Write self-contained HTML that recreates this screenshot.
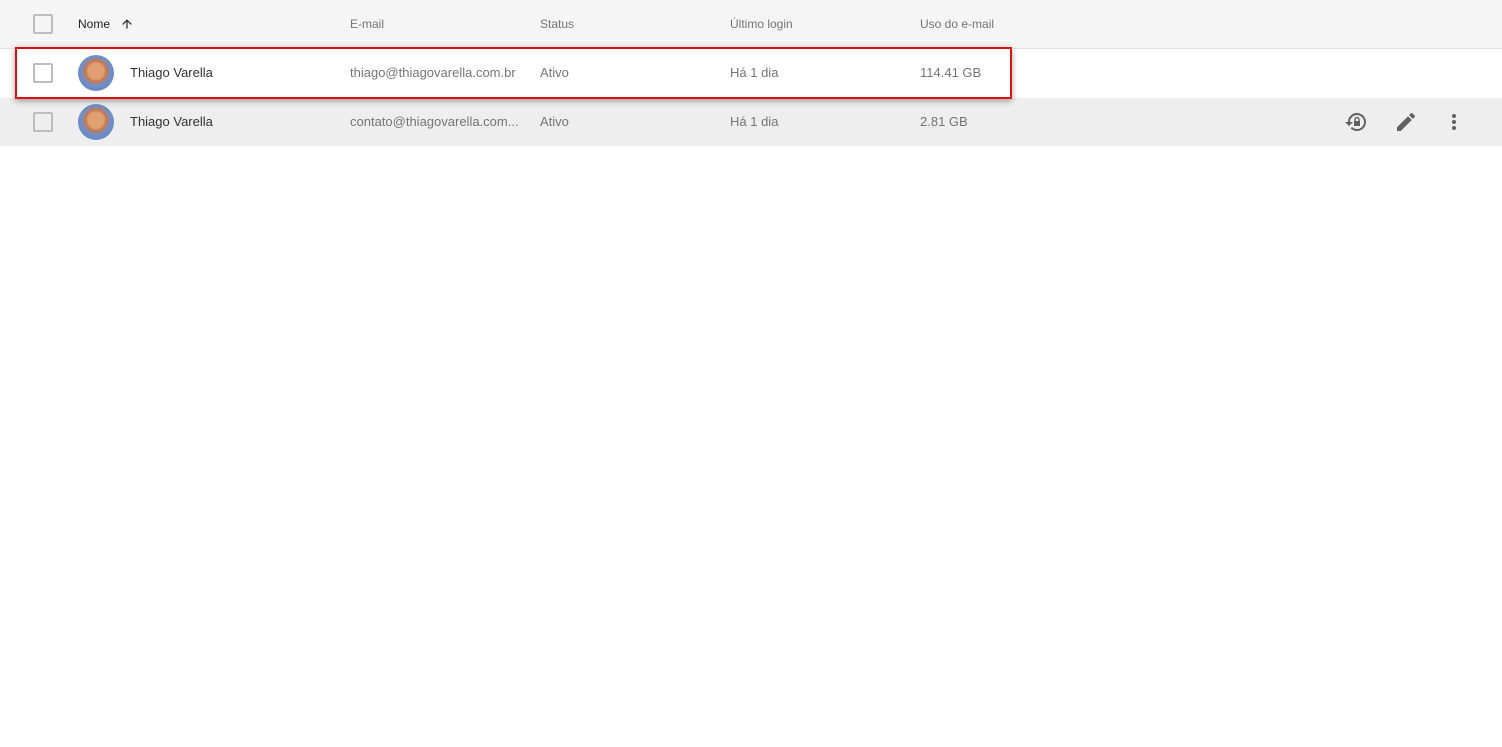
<!DOCTYPE html>
<html><head><meta charset="utf-8"><style>
body{margin:0;width:1502px;height:747px;background:#fff;font-family:"Liberation Sans",Arial,sans-serif;font-size:13px;color:#757575;position:relative;overflow:hidden}
.row{position:absolute;left:0;width:1502px;height:48px}
.cb{position:absolute;left:33px;width:16px;height:16px;border:2px solid #bdbdbd;border-radius:2px;top:14px}
.t{position:absolute;top:0;line-height:48px;white-space:nowrap}
.av{position:absolute;left:78px;top:6px;width:36px;height:36px;border-radius:50%;background:radial-gradient(circle at 50% 45%,#e0a070 0 30%,#c87850 38%,#6f8fc8 55%,#5c7fc0 100%)}
.name{left:130px;color:#333}
</style></head><body>
<div class="row" style="top:0;background:#f5f5f5;border-bottom:1px solid #e0e0e0;height:48px">
<div class="cb"></div>
<div class="t" style="left:78px;color:#212121;font-size:12px">Nome</div>
<svg style="position:absolute;left:120px;top:17px" width="14" height="14" viewBox="0 0 24 24"><path d="M4 12l1.4 1.4L11 7.8V20h2V7.8l5.6 5.6L20 12l-8-8z" fill="#212121"/></svg>
<div class="t" style="left:350px;font-size:12px">E-mail</div>
<div class="t" style="left:540px;font-size:12px">Status</div>
<div class="t" style="left:730px;font-size:12px">Último login</div>
<div class="t" style="left:920px;font-size:12px">Uso do e-mail</div>
</div>
<div class="row" style="top:49px;background:#fff">
<div class="cb"></div><div class="av"></div>
<div class="t name">Thiago Varella</div>
<div class="t" style="left:350px">thiago@thiagovarella.com.br</div>
<div class="t" style="left:540px">Ativo</div>
<div class="t" style="left:730px">Há 1 dia</div>
<div class="t" style="left:920px">114.41 GB</div>
</div>
<div class="row" style="top:98px;background:#eeeeee">
<div class="cb"></div><div class="av"></div>
<div class="t name">Thiago Varella</div>
<div class="t" style="left:350px">contato@thiagovarella.com...</div>
<div class="t" style="left:540px">Ativo</div>
<div class="t" style="left:730px">Há 1 dia</div>
<div class="t" style="left:920px">2.81 GB</div>
<svg style="position:absolute;left:1344px;top:12px" width="24" height="24" viewBox="0 0 24 24"><path d="M13 3a9 9 0 0 0-9 9H1l4 4 4-4H6a7 7 0 1 1 2.05 4.95l-1.42 1.42A9 9 0 1 0 13 3z" fill="#616161"/><rect x="10" y="11" width="6" height="5" fill="#616161"/><path d="M11 11V9.5a2 2 0 0 1 4 0V11" stroke="#616161" stroke-width="1.4" fill="none"/></svg>
<svg style="position:absolute;left:1394px;top:12px" width="24" height="24" viewBox="0 0 24 24"><path d="M3 17.25V21h3.75L17.81 9.94l-3.75-3.75L3 17.25zM20.71 7.04a1 1 0 0 0 0-1.41l-2.34-2.34a1 1 0 0 0-1.41 0l-1.83 1.83 3.75 3.75 1.83-1.83z" fill="#616161"/></svg>
<svg style="position:absolute;left:1442px;top:12px" width="24" height="24" viewBox="0 0 24 24"><circle cx="12" cy="6" r="2" fill="#616161"/><circle cx="12" cy="12" r="2" fill="#616161"/><circle cx="12" cy="18" r="2" fill="#616161"/></svg>
</div>
<div style="position:absolute;left:15px;top:47px;width:993px;height:48px;border:2px solid #e01010;box-shadow:0 2px 6px rgba(0,0,0,.35)"></div>
</body></html>
